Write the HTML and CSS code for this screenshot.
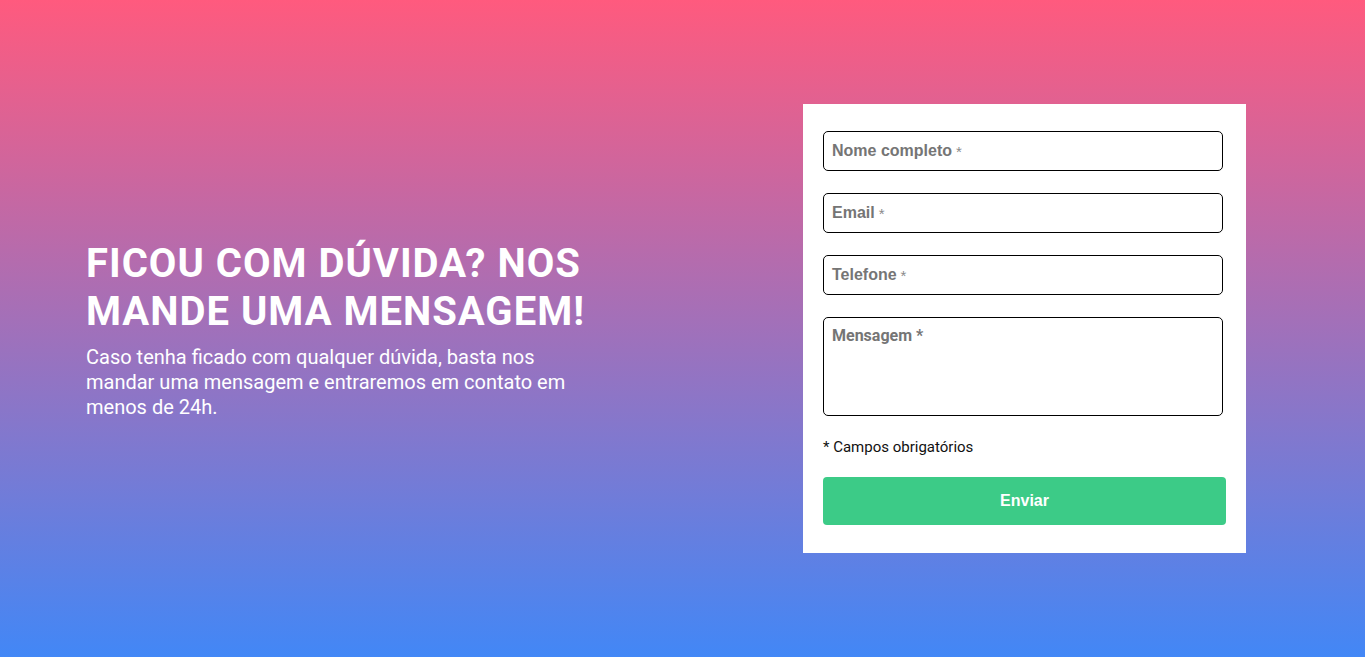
FILE: index.html
```html
<!DOCTYPE html>
<html lang="pt-BR">
<head>
<meta charset="utf-8">
<title>Contato</title>
<link rel="stylesheet" href="styles.css">
</head>
<body>
<main class="contact">
  <section class="intro">
    <h1 class="intro-title">FICOU COM DÚVIDA? NOS MANDE UMA MENSAGEM!</h1>
    <p class="intro-text">Caso tenha ficado com qualquer dúvida, basta nos mandar uma mensagem e entraremos em contato em menos de 24h.</p>
  </section>
  <form class="card">
    <label class="field"><span class="ph">Nome completo</span><span class="req">*</span><input class="field-input" type="text" aria-label="Nome completo"></label>
    <label class="field"><span class="ph">Email</span><span class="req">*</span><input class="field-input" type="email" aria-label="Email"></label>
    <label class="field"><span class="ph">Telefone</span><span class="req">*</span><input class="field-input" type="tel" aria-label="Telefone"></label>
    <textarea class="field-area" placeholder="Mensagem *"></textarea>
    <p class="note">* Campos obrigatórios</p>
    <button class="submit" type="button">Enviar</button>
  </form>
</main>
</body>
</html>
```
FILE: styles.css
```css
* { box-sizing: border-box; }
html, body { margin: 0; height: 100%; }
body {
  font-family: Roboto, "Liberation Sans", sans-serif;
  background: linear-gradient(180deg, #ff5a7e 0%, #4287f6 100%);
}
.contact {
  height: 100vh;
  display: flex;
  align-items: center;
  justify-content: space-between;
  padding: 0 119px 0 86px;
}
.intro { width: 520px; color: #fff; padding-top: 3px; }
.intro-title {
  margin: 0;
  font-size: 40px;
  line-height: 48px;
  font-weight: 700;
  letter-spacing: 1px;
}
.intro-text {
  margin: 9px 0 0;
  font-size: 20px;
  line-height: 25px;
}
.card {
  width: 443px;
  background: #fff;
  padding: 27px 20px 28px;
  display: flex;
  flex-direction: column;
}
.field {
  width: 400px;
  height: 40px;
  border: 1px solid #000;
  border-radius: 5px;
  padding: 0 8px;
  margin: 0 0 22px;
  display: flex;
  align-items: center;
  font-family: "Liberation Sans", Arial, sans-serif;
  font-size: 16px;
  color: #757575;
  background: #fff;
  cursor: text;
}
.ph { font-weight: 700; }
.req { margin-left: 4px; font-size: 15px; color: #8a8a8a; }
.field-input {
  flex: 1;
  min-width: 0;
  height: 100%;
  border: 0;
  padding: 0 0 0 4px;
  background: transparent;
  font: inherit;
  outline: none;
}
.field-area {
  width: 400px;
  height: 99px;
  border: 1px solid #000;
  border-radius: 5px;
  margin: 0;
  padding: 8px;
  resize: none;
  font-family: Roboto, sans-serif;
  font-size: 16px;
  font-weight: 700;
  outline: none;
}
.field-area::placeholder { color: #757575; opacity: 1; }
.note {
  margin: 22px 0 21px;
  font-size: 15px;
  line-height: 18px;
  color: #111;
}
.submit {
  height: 48px;
  width: 100%;
  border: 0;
  border-radius: 4px;
  background: #3ccb87;
  color: #fff;
  font-family: "Liberation Sans", Arial, sans-serif;
  font-size: 16px;
  font-weight: 700;
}
```
